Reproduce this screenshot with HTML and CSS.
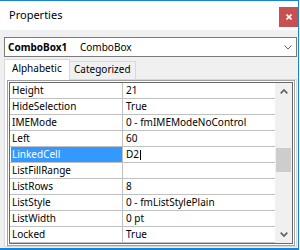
FILE: index.html
```html
<!DOCTYPE html>
<html>
<head>
<meta charset="utf-8">
<link rel="stylesheet" href="styles.css">
</head>
<body>
<div class="window">
  <div class="titlebar">
    <span class="title">Properties</span>
    <div class="close">
      <svg width="6" height="6" viewBox="0 0 6 6"><path d="M0.5 0.5L5.5 5.5M5.5 0.5L0.5 5.5" stroke="#fff" stroke-width="1.6" fill="none"/></svg>
    </div>
  </div>
  <div class="body">
    <div class="combo">
      <span class="obj-name">ComboBox1</span>
      <span class="obj-type">ComboBox</span>
      <svg class="combo-chev" width="8" height="5" viewBox="0 0 8 5"><polyline points="0.5,0.5 4,4 7.5,0.5" stroke="#606060" stroke-width="1" fill="none"/></svg>
    </div>
    <div class="tabs">
      <div class="tab active">Alphabetic</div>
      <div class="tab">Categorized</div>
    </div>
    <div class="panel">
      <div class="list">
        <div class="list-inner">
          <div class="grid">
            <div class="row"><div class="name"><span class="label">Height</span></div><div class="value">21</div></div>
            <div class="row"><div class="name"><span class="label">HideSelection</span></div><div class="value">True</div></div>
            <div class="row"><div class="name"><span class="label">IMEMode</span></div><div class="value">0 - fmIMEModeNoControl</div></div>
            <div class="row"><div class="name"><span class="label">Left</span></div><div class="value">60</div></div>
            <div class="row"><div class="name"><span class="label selected">LinkedCell</span></div><div class="value">D2<span class="caret"></span></div></div>
            <div class="row"><div class="name"><span class="label">ListFillRange</span></div><div class="value"></div></div>
            <div class="row"><div class="name"><span class="label">ListRows</span></div><div class="value">8</div></div>
            <div class="row"><div class="name"><span class="label">ListStyle</span></div><div class="value">0 - fmListStylePlain</div></div>
            <div class="row"><div class="name"><span class="label">ListWidth</span></div><div class="value">0 pt</div></div>
            <div class="row"><div class="name"><span class="label">Locked</span></div><div class="value">True</div></div>
          </div>
          <div class="scrollbar">
            <div class="sb-btn">
              <svg width="8" height="5" viewBox="0 0 8 5"><polyline points="0.7,4.3 4,1 7.3,4.3" stroke="#606060" stroke-width="1.7" fill="none"/></svg>
            </div>
            <div class="sb-track"><div class="thumb"></div></div>
            <div class="sb-btn">
              <svg width="8" height="5" viewBox="0 0 8 5"><polyline points="0.7,0.7 4,4 7.3,0.7" stroke="#606060" stroke-width="1.7" fill="none"/></svg>
            </div>
          </div>
        </div>
      </div>
    </div>
  </div>
</div>
</body>
</html>
```

FILE: styles.css
```css
body {
  margin: 0;
  background: #fff;
  font-family: "Noto Sans", "DejaVu Sans", sans-serif;
  font-size: 10px;
  color: #000;
}

.window {
  width: 299px;
  height: 250px;
  box-sizing: border-box;
  border-top: 1px solid #1883d7;
  border-right: 1px solid #1883d7;
  border-bottom: 2px solid #1883d7;
  background: #f0f0f0;
  display: flex;
  flex-direction: column;
}

.titlebar {
  height: 29px;
  flex: none;
  background: #fff;
  display: flex;
  justify-content: space-between;
  align-items: flex-start;
}

.title {
  font-size: 11px;
  line-height: 16px;
  padding: 6px 0 0 9px;
}

.close {
  width: 19px;
  height: 20px;
  margin-top: 6px;
  background: #c75050;
  display: flex;
  align-items: center;
  justify-content: center;
}

.close svg {
  display: block;
}

.body {
  flex: 1;
  display: flex;
  flex-direction: column;
  padding: 7px 1px 1px 4px;
}

.combo {
  height: 20px;
  flex: none;
  box-sizing: border-box;
  border: 1px solid #7a7a7a;
  background: #fff;
  display: flex;
  align-items: center;
  padding-left: 3px;
  line-height: 18px;
}

.obj-name {
  font-weight: bold;
  width: 72px;
}

.combo-chev {
  margin-left: auto;
  margin-right: 4px;
  display: block;
}

.tabs {
  height: 20px;
  flex: none;
  margin-top: 2px;
  display: flex;
  align-items: flex-end;
  position: relative;
  z-index: 1;
}

.tab {
  box-sizing: border-box;
  border: 1px solid #d9d9d9;
  border-bottom: none;
  background: #f0f0f0;
  white-space: nowrap;
}

.tab.active {
  width: 66px;
  height: 21px;
  margin-bottom: -1px;
  padding-left: 7px;
  line-height: 16px;
  background: #fff;
  position: relative;
  z-index: 2;
}

.tab:not(.active) {
  width: 67px;
  height: 18px;
  margin-left: -1px;
  padding-left: 4px;
  line-height: 14px;
}

.panel {
  height: 168px;
  flex: none;
  box-sizing: border-box;
  border: 1px solid #d9d9d9;
  background: #fff;
  padding: 0 1px 0 2px;
}

.list {
  height: 166px;
  box-sizing: border-box;
  border: 1px solid #a0a0a0;
  padding: 1px;
  background: #fff;
}

.list-inner {
  height: 100%;
  box-sizing: border-box;
  border: 1px solid #696969;
  display: flex;
}

.grid {
  flex: 1;
}

.row {
  display: flex;
  height: 16px;
  box-sizing: border-box;
  border-bottom: 1px solid #c0c0c0;
  line-height: 15px;
  white-space: nowrap;
}

.name {
  width: 113px;
  flex: none;
  box-sizing: border-box;
  border-right: 1px solid #c0c0c0;
  padding-left: 1px;
  display: flex;
}

.label {
  flex: 1;
  padding-left: 1px;
}

.label.selected {
  background: #3399ff;
  color: #fff;
}

.value {
  padding-left: 3px;
  display: flex;
  align-items: center;
}

.caret {
  width: 1px;
  height: 10px;
  background: #000;
  margin-left: 1px;
}

.scrollbar {
  width: 17px;
  flex: none;
  background: #f0f0f0;
  display: flex;
  flex-direction: column;
}

.sb-btn {
  height: 17px;
  flex: none;
  display: flex;
  align-items: center;
  justify-content: center;
}

.sb-btn svg {
  display: block;
}

.sb-track {
  flex: 1;
}

.thumb {
  margin: 48px 1px 0 1px;
  height: 24px;
  background: #cdcdcd;
}
```
